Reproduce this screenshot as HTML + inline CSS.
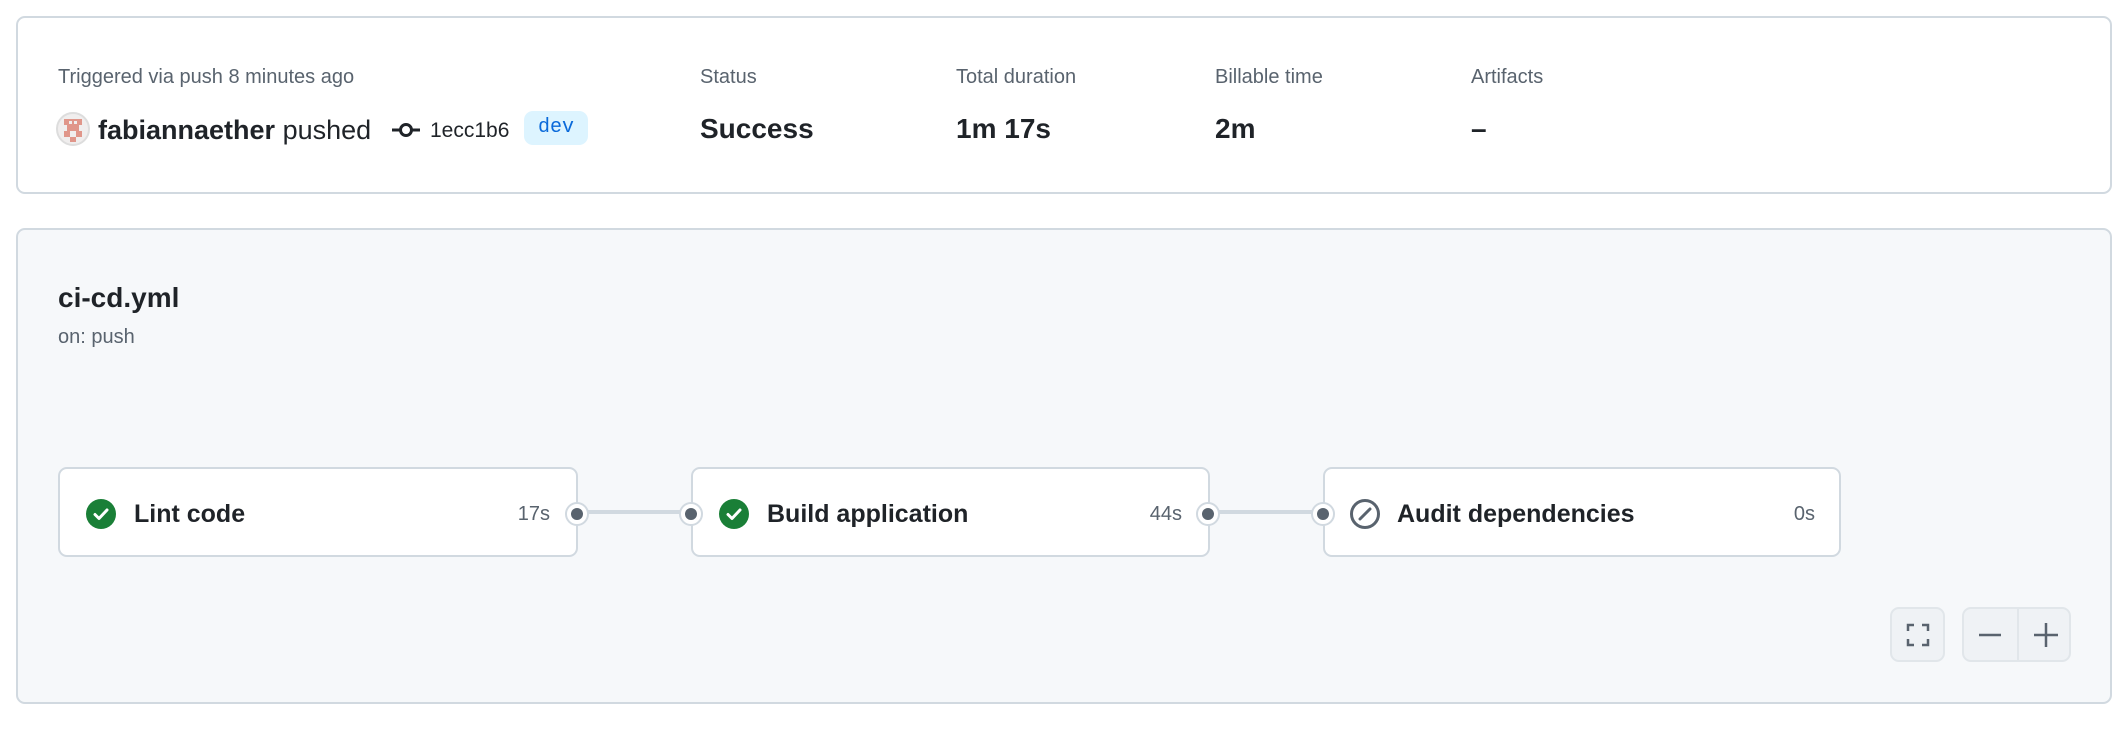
<!DOCTYPE html>
<html><head><meta charset="utf-8"><style>
*{box-sizing:border-box;margin:0;padding:0}
body{width:2128px;height:730px;background:#fff;font-family:"Liberation Sans",sans-serif;color:#1f2328;position:relative;overflow:hidden}
.card1{position:absolute;left:16px;top:16px;width:2096px;height:178px;border:2px solid #d1d9e0;border-radius:9px;background:#fff}
.card2{position:absolute;left:16px;top:228px;width:2096px;height:476px;border:2px solid #d1d9e0;border-radius:9px;background:#f6f8fa}
.a{position:absolute}
.lbl{font-size:20px;color:#59636e}
.val{font-size:28px;font-weight:bold;color:#1f2328}
.job{position:absolute;top:467px;height:90px;background:#fff;border:2px solid #d1d9e0;border-radius:9px}
.jn{position:absolute;top:31px;font-size:25px;font-weight:bold}
.jd{position:absolute;top:34px;font-size:20px;color:#59636e}
.dot{position:absolute;width:24px;height:24px;border-radius:50%;background:#fff;border:2px solid #d1d9e0;top:502px}
.dot::after{content:"";position:absolute;left:4px;top:4px;width:12px;height:12px;border-radius:50%;background:#59636e}
.line{position:absolute;top:510px;height:4px;background:#d1d9e0}
.btn{position:absolute;top:607px;height:55px;background:#eff2f5;border:2px solid #e1e6ea;border-radius:9px}
</style></head><body>
<div class="card1"></div>
<div class="a lbl" style="left:58px;top:66px">Triggered via push 8 minutes ago</div>
<svg class="a" style="left:56px;top:112px" width="34" height="34" viewBox="0 0 34 34"><circle cx="17" cy="17" r="16" fill="#f0eeee" stroke="#ddd" stroke-width="2"/><rect x="8" y="7" width="18" height="6" fill="#e0968a"/><rect x="11" y="13" width="12" height="6" fill="#e0968a"/><rect x="8" y="19" width="6" height="6" fill="#e0968a"/><rect x="20" y="19" width="6" height="6" fill="#e0968a"/><rect x="14" y="25" width="6" height="5" fill="#e0968a"/><rect x="13" y="9" width="3" height="3" fill="#f0eeee"/><rect x="18" y="9" width="3" height="3" fill="#f0eeee"/></svg>
<div class="a" style="left:98px;top:115px;font-size:27px"><b>fabiannaether</b> <span style="color:#1f2328">pushed</span></div>
<svg class="a" style="left:392px;top:121px" width="28" height="18" viewBox="0 0 28 18"><line x1="0" y1="9" x2="28" y2="9" stroke="#1f2328" stroke-width="3"/><circle cx="14" cy="9" r="5.5" fill="#fff" stroke="#1f2328" stroke-width="3"/></svg>
<div class="a" style="left:430px;top:119px;font-size:21px">1ecc1b6</div>
<div class="a" style="left:524px;top:111px;width:64px;height:34px;border-radius:9px;background:#ddf4ff;color:#0969da;font-family:'Liberation Mono',monospace;font-size:20px;text-align:center;line-height:34px">dev</div>
<div class="a lbl" style="left:700px;top:66px">Status</div>
<div class="a val" style="left:700px;top:113px">Success</div>
<div class="a lbl" style="left:956px;top:66px">Total duration</div>
<div class="a val" style="left:956px;top:113px">1m 17s</div>
<div class="a lbl" style="left:1215px;top:66px">Billable time</div>
<div class="a val" style="left:1215px;top:113px">2m</div>
<div class="a lbl" style="left:1471px;top:66px">Artifacts</div>
<div class="a val" style="left:1471px;top:113px">–</div>

<div class="card2"></div>
<div class="a" style="left:58px;top:282px;font-size:28px;font-weight:bold">ci-cd.yml</div>
<div class="a lbl" style="left:58px;top:326px">on: push</div>

<div class="line" style="left:588px;width:104px"></div>
<div class="line" style="left:1219px;width:105px"></div>

<div class="job" style="left:58px;width:520px">
<svg class="a" style="left:26px;top:30px" width="30" height="30" viewBox="0 0 30 30"><circle cx="15" cy="15" r="15" fill="#1a7f37"/><path d="M9 15.5l4 4 8-8.5" fill="none" stroke="#fff" stroke-width="3" stroke-linecap="round" stroke-linejoin="round"/></svg>
<div class="jn" style="left:74px">Lint code</div><div class="jd" style="right:26px">17s</div></div>
<div class="job" style="left:691px;width:519px">
<svg class="a" style="left:26px;top:30px" width="30" height="30" viewBox="0 0 30 30"><circle cx="15" cy="15" r="15" fill="#1a7f37"/><path d="M9 15.5l4 4 8-8.5" fill="none" stroke="#fff" stroke-width="3" stroke-linecap="round" stroke-linejoin="round"/></svg>
<div class="jn" style="left:74px">Build application</div><div class="jd" style="right:26px">44s</div></div>
<div class="job" style="left:1323px;width:518px">
<svg class="a" style="left:24px;top:29px" width="32" height="32" viewBox="0 0 32 32"><circle cx="16" cy="16" r="13.5" fill="none" stroke="#59636e" stroke-width="3"/><line x1="11" y1="21" x2="21" y2="11" stroke="#59636e" stroke-width="3" stroke-linecap="round"/></svg>
<div class="jn" style="left:72px">Audit dependencies</div><div class="jd" style="right:24px">0s</div></div>

<div class="dot" style="left:565px"></div>
<div class="dot" style="left:679px"></div>
<div class="dot" style="left:1196px"></div>
<div class="dot" style="left:1311px"></div>

<div class="btn" style="left:1890px;width:55px"><svg class="a" style="left:14px;top:14px" width="24" height="24" viewBox="0 0 24 24" fill="none" stroke="#59636e" stroke-width="2.5"><path d="M2 8V2h6M16 2h6v6M22 16v6h-6M8 22H2v-6"/></svg></div>
<div class="btn" style="left:1962px;width:109px"><div class="a" style="left:53px;top:0;width:2px;height:51px;background:#e1e6ea"></div>
<svg class="a" style="left:14px;top:14px" width="24" height="24"><line x1="1" y1="12" x2="23" y2="12" stroke="#59636e" stroke-width="2.5"/></svg>
<svg class="a" style="left:69px;top:13px" width="26" height="26"><line x1="1" y1="13" x2="25" y2="13" stroke="#59636e" stroke-width="2.5"/><line x1="13" y1="1" x2="13" y2="25" stroke="#59636e" stroke-width="2.5"/></svg></div>
</body></html>
